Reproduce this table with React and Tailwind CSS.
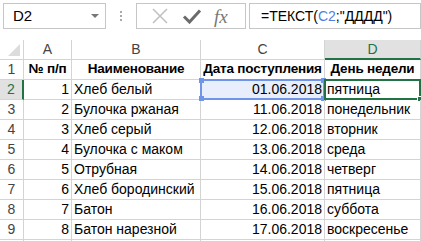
const rows = [
  ["1", "Хлеб белый", "01.06.2018", "пятница"],
  ["2", "Булочка ржаная", "11.06.2018", "понедельник"],
  ["3", "Хлеб серый", "12.06.2018", "вторник"],
  ["4", "Булочка с маком", "13.06.2018", "среда"],
  ["5", "Отрубная", "14.06.2018", "четверг"],
  ["6", "Хлеб бородинский", "15.06.2018", "пятница"],
  ["7", "Батон", "16.06.2018", "суббота"],
  ["8", "Батон нарезной", "17.06.2018", "воскресенье"],
];

const cell = "h-[20px] border-r border-b border-[#d4d4d4] flex items-center overflow-hidden whitespace-nowrap";
const head = "h-[20px] border-r border-b border-[#d4d4d4] flex items-center justify-center text-[#444]";
const bold = " justify-center font-bold text-[13.5px] tracking-[-0.2px]";

function FormulaBar() {
  return (
    <div className="flex h-[26px] mt-[3px]">
      <div className="ml-[3px] w-[103px] border border-[#c6c6c6] flex items-center justify-between pl-[9px] pr-[6px] text-[15px]">
        <span>D2</span>
        <span className="w-0 h-0 border-x-[4px] border-t-[4px] border-x-transparent border-t-[#777]" />
      </div>
      <div className="w-[30px] flex flex-col items-center justify-center gap-[2px]">
        <span className="w-[2px] h-[2px] bg-[#aaa]" />
        <span className="w-[2px] h-[2px] bg-[#aaa]" />
        <span className="w-[2px] h-[2px] bg-[#aaa]" />
      </div>
      <div className="w-[110px] border border-[#c6c6c6] flex items-center pl-[13px] gap-[12px]">
        <svg width="20" height="16" viewBox="0 0 20 16">
          <path d="M3 1L17 15M17 1L3 15" stroke="#c2c2c2" strokeWidth="1.6" fill="none" />
        </svg>
        <svg width="20" height="16" viewBox="0 0 20 16">
          <path d="M2 8.5L7.5 14L18 2.5" stroke="#6b6b6b" strokeWidth="3" fill="none" />
        </svg>
        <span className="font-['Liberation_Serif',serif] italic text-[19px] text-[#777] leading-none">fx</span>
      </div>
      <div className="ml-[3px] flex-1 border border-[#c6c6c6] flex items-center pl-[11px] text-[14px]">
        <span>=ТЕКСТ(</span>
        <span className="text-[#4f7fe0]">C2</span>
        <span>;"ДДДД")</span>
      </div>
    </div>
  );
}

export default function App() {
  return (
    <div className="w-[421px] h-[241px] overflow-hidden bg-white font-['Liberation_Sans',sans-serif] text-[14px] text-black">
      <FormulaBar />
      <div className="mt-[11px] grid grid-cols-[24px_48px_129px_124px_96px_1fr]">
        <div className={head + " relative"}>
          <span className="absolute right-[3px] bottom-[3px] w-0 h-0 border-b-[12px] border-l-[12px] border-b-[#dcdcdc] border-l-transparent" />
        </div>
        <div className={head}>A</div>
        <div className={head}>B</div>
        <div className={head}>C</div>
        <div className={head + " bg-[#e1e1e1] text-[#217346] border-b-2 border-b-[#217346]"}>D</div>
        <div className={head} />

        <div className={head}>1</div>
        <div className={cell + bold}>№ п/п</div>
        <div className={cell + bold}>Наименование</div>
        <div className={cell + bold}>Дата поступления</div>
        <div className={cell + bold}>День недели</div>
        <div className={cell} />

        {rows.map((r, i) => {
          const sel = i === 0;
          return [
            <div
              key={"h" + i}
              className={head + (sel ? " bg-[#e1e1e1] text-[#217346] border-r-2 border-r-[#217346]" : "")}
            >
              {i + 2}
            </div>,
            <div key={"a" + i} className={cell + " justify-end pr-[2px]"}>{r[0]}</div>,
            <div key={"b" + i} className={cell + " pl-[2px]"}>{r[1]}</div>,
            <div key={"c" + i} className={cell + " justify-end pr-[2px] relative overflow-visible" + (sel ? " bg-[#e8eefb]" : "")}>
              {sel && (
                <span className="absolute -left-[1px] -top-[1px] -right-[1px] -bottom-[1px] border-2 border-[#6f94e8]">
                  <span className="absolute -left-[3px] -top-[3px] w-[5px] h-[5px] bg-[#6f94e8]" />
                  <span className="absolute -left-[3px] -bottom-[3px] w-[5px] h-[5px] bg-[#6f94e8]" />
                  <span className="absolute -right-[3px] -top-[3px] w-[5px] h-[5px] bg-[#6f94e8]" />
                  <span className="absolute -right-[3px] -bottom-[3px] w-[5px] h-[5px] bg-[#6f94e8]" />
                </span>
              )}
              <span className="relative">{r[2]}</span>
            </div>,
            <div key={"d" + i} className={cell + " pl-[2px] relative overflow-visible"}>
              {sel && (
                <span className="absolute -left-[1px] -top-[1px] -right-[1px] -bottom-[1px] border-2 border-[#217346]">
                  <span className="absolute -right-[4px] -bottom-[4px] w-[6px] h-[6px] bg-[#217346] border border-white" />
                </span>
              )}
              <span className="relative">{r[3]}</span>
            </div>,
            <div key={"e" + i} className={cell} />,
          ];
        })}
        <div className={head} />
        <div className={cell} />
        <div className={cell} />
        <div className={cell} />
        <div className={cell} />
        <div className={cell} />
      </div>
    </div>
  );
}
